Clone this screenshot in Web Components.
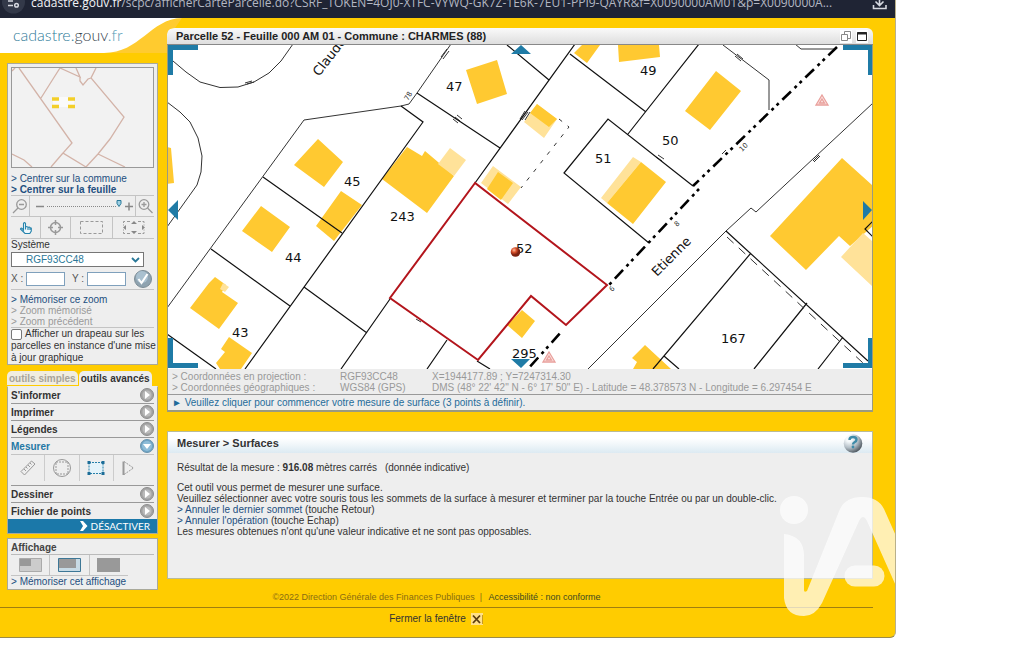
<!DOCTYPE html>
<html lang="fr">
<head>
<meta charset="utf-8">
<title>cadastre.gouv.fr - Parcelle 52</title>
<style>
  body { margin: 0; background: #fff; font: 10px/11px "Liberation Sans", Arial, sans-serif; color: #333; }
</style>
</head>
<body>
<app-window>
  <url-bar slot="chrome"></url-bar>
  <site-logo slot="side"></site-logo>
  <navigation-panel slot="side"></navigation-panel>
  <tools-panel slot="side"></tools-panel>
  <display-panel slot="side"></display-panel>
  <map-panel heading="Parcelle 52 - Feuille 000 AM 01 - Commune : CHARMES (88)">
    <cadastral-map></cadastral-map>
    <coordinate-bar slot="status"></coordinate-bar>
    <span slot="message">► Veuillez cliquer pour commencer votre mesure de surface (3 points à définir).</span>
  </map-panel>
  <info-panel heading="Mesurer &gt; Surfaces">
    <measure-result value="916.08"></measure-result>
  </info-panel>
  <page-footer slot="footer"></page-footer>
  <brand-mark slot="overlay"></brand-mark>
</app-window>

<script>
const define = (name, html, setup) => {
  const tpl = document.createElement('template');
  tpl.innerHTML = html;
  customElements.define(name, class extends HTMLElement {
    constructor() {
      super();
      this.attachShadow({ mode: 'open' }).append(tpl.content.cloneNode(true));
    }
    connectedCallback() { if (setup) setup(this, this.shadowRoot); }
  });
};

define('app-window', `
<style>
  :host { display: block; position: relative; margin-right: 129px; background: #fc0; overflow: hidden;
    border-right: 1px solid #b9b08a; border-bottom: 1px solid #9a8a4a; border-radius: 0 0 6px 0; }
  .columns { display: flex; gap: 9px; padding: 0 22px 0 0; }
  .side { flex: none; width: 158px; }
  .main { flex: 1; min-width: 0; padding-top: 10px; display: flex; flex-direction: column; gap: 19px; }
</style>
<slot name="chrome"></slot>
<div class="columns">
  <div class="side"><slot name="side"></slot></div>
  <main class="main"><slot></slot></main>
</div>
<slot name="footer"></slot>
<slot name="overlay"></slot>`);

define('url-bar', `
<style>
  :host { display: flex; align-items: flex-start; height: 18px; background: #1f2434; color: #b3b7c2; overflow: hidden;
    font: 12px/18px "Open Sans", "Noto Sans", sans-serif; }
  .url { flex: 1; min-width: 0; margin-top: -6px; white-space: nowrap; overflow: hidden; }
  b { font-weight: 400; color: #f2f3f6; }
  svg { display: block; flex: none; }
  .site { width: 31px; height: 18px; }
  .dl { width: 30px; height: 18px; }
</style>
<svg class="site" viewBox="0 0 31 18"><circle cx="13.500" cy="2" r="11.500" fill="#333949"/>
  <g stroke="#d5d8e0" stroke-width="1.500" fill="none"><path d="M8 1h5M13 5.500H8"/><circle cx="16.500" cy="5.300" r="1.800"/></g></svg>
<div class="url"><b>cadastre.gouv.fr</b>/scpc/afficherCarteParcelle.do?CSRF_TOKEN=4OJ0-XTFC-VYWQ-GK7Z-1E6K-7EU1-PPI9-QAYR&amp;f=X0090000AM01&amp;p=X0090000A...</div>
<svg class="dl" viewBox="0 0 30 18"><g stroke="#d5d8e0" stroke-width="1.600" fill="none"><path d="M14.500 0v5M10.500 1.500l4 4 4-4M8.500 5v3.500H21V5"/></g></svg>`);

define('site-logo', `
<style>
  :host { display: block; position: relative; height: 35px; margin-bottom: 10px; }
  .bg { display: block; width: 182px; height: 35px; }
  a { position: absolute; left: 13px; top: 6px; font: 300 16px/22px Lato, sans-serif; color: #2f7b99; text-decoration: none; }
  .g { color: #36444e; } .f { color: #559cb6; }
</style>
<svg class="bg" viewBox="0 0 182 35"><path d="M182 0C150 2 138 35 104 35H167V16q0-6 8-6L182 0Z" fill="#ffcb2f"/><path d="M0 0H182C150 1 140 35 104 35H0Z" fill="#fff"/></svg>
<a href="#">cadastre.<span class="g">gouv</span><span class="f">.fr</span></a>`);

define('side-box', `
<style>
  :host { display: block; margin-left: 7px; padding: 0 3px; background: #eee; border: 1px solid #a9a99a; }
</style><slot></slot>`);

define('nav-link', `
<style>
  :host { display: block; white-space: nowrap; }
  a { color: #234f80; text-decoration: none; }
  :host([strong]) a { font-weight: 700; }
  :host([off]) a { color: #9a9a9a; }
</style><a href="#">&gt; <slot></slot></a>`);

define('mini-map', `
<style>
  :host { display: block; background: #f2f2f2; border: 1px solid #999; }
  svg { display: block; width: 100%; }
</style>
<svg viewBox="0 0 141 99" fill="none" stroke="#d3b3a8" stroke-width="1.300">
  <path d="M7 0L60 75 51 85 74 99 86 86 98 71 112 49 79 10 84 0M0 3l3-3M29 30L41 11 48 0 68 9 64 0M68 9v4l3 4 5-6 3-1M51 85L39 99M86 86l27 13M0 86l12 6 8 7"/>
  <path d="M41 29h21v10H41z" fill="#fafafa" stroke="none"/>
  <path d="M40 31h7M56 31h7M40 38.500h7M56 38.500h7" stroke="#f3cf2a" stroke-width="3.600"/>
</svg>`);

define('navigation-panel', `
<style>
  :host { display: block; color: #333; }
  mini-map { margin: 3px 0 5px; }
  .row { display: flex; align-items: stretch; border-top: 1px solid #c4c4c4; }
  button { border: 0; padding: 0; background: none; display: flex; align-items: center; justify-content: center; }
  svg { display: block; }
  .zoom { height: 20px; }
  .zoom button { flex: none; width: 18px; }
  .zoom .track { flex: 1; border: solid #c4c4c4; border-width: 0 1px; display: flex; align-items: center; justify-content: center; }
  .modes { height: 21px; }
  .modes button { flex: 1; }
  .modes button + button { border-left: 1px solid #c4c4c4; }
  .modes button:nth-child(n+3) { flex: none; width: 42px; }
  label { display: block; }
  .sys { padding: 0 0 2px; }
  .sel { position: relative; width: 133px; }
  select { appearance: none; display: block; width: 133px; height: 15px; box-sizing: border-box; border: 1px solid #767676; border-radius: 0;
    background: #fff; color: #2a7898; font: inherit; padding: 0 0 0 14px; }
  .sel svg { position: absolute; right: 4px; top: 5px; }
  .xy { display: flex; align-items: center; height: 21px; padding-top: 1px; color: #555; }
  .xy label { width: 15px; }
  .xy label.y { width: 15px; margin-left: 7px; }
  .xy input { width: 39px; height: 14px; box-sizing: border-box; border: 1px solid #7fa0bc; background: #fff; padding: 0 2px; font: inherit; }
  .xy button { margin-left: auto; margin-right: 2px; }
  .links { border-top: 1px solid #c4c4c4; padding: 4px 0 0; }
  .flag { border-top: 1px solid #c4c4c4; line-height: 12px; white-space: nowrap; }
  .flag input { appearance: none; box-sizing: border-box; width: 11px; height: 11px; margin: 1px 3px 0 0; border: 1px solid #777; border-radius: 2px; background: #fff; vertical-align: top; }
</style>
<side-box>
  <mini-map></mini-map>
  <nav-link>Centrer sur la commune</nav-link>
  <nav-link strong>Centrer sur la feuille</nav-link>
  <div class="row zoom">
    <button aria-label="Zoom arrière"><svg width="16" height="18" viewBox="0 0 16 18" fill="none" stroke="#999" stroke-width="1.300"><circle cx="9.500" cy="7.500" r="4.800"/><path d="M6 11l-5 5M7 7.500h5"/></svg></button>
    <div class="track"><svg width="104" height="18" viewBox="0 0 104 18"><path d="M5 9.500h8M94 9.500h8M98 5.500v8" stroke="#888" stroke-width="1.500"/><path d="M16 9.500h70" stroke="#888" stroke-dasharray="1 1"/><path d="M86 3.500h4v3l-2 3-2-3z" fill="#9fd0e4" stroke="#287a9a"/></svg></div>
    <button aria-label="Zoom avant"><svg width="16" height="18" viewBox="0 0 16 18" fill="none" stroke="#999" stroke-width="1.300"><circle cx="7" cy="7.500" r="4.800"/><path d="M10.500 11l5 5M4.500 7.500h5M7 5v5"/></svg></button>
  </div>
  <div class="row modes">
    <button aria-label="Déplacer"><svg width="14" height="14" viewBox="0 0 14 14" fill="#eef8fc" stroke="#2583ac" stroke-width="1.100"><path d="M4.500 9V2.500q1-1.800 2 0V6l1.200-.5 1.300.7 1.300-.2 1 .8 1 .4V10l-1.500 2.500H6L1.500 8q.5-1.500 1.800-.4zM6.500 6v2.500M9 6.500v2.500M11 7v2"/></svg></button>
    <button aria-label="Recentrer"><svg width="17" height="17" viewBox="0 0 17 17" fill="none" stroke="#999" stroke-width="1.500"><circle cx="8.500" cy="8.500" r="5"/><path d="M8.500 1v5M8.500 11v5M1 8.500h5M11 8.500h5"/></svg></button>
    <button aria-label="Zoom rectangle"><svg width="24" height="14" viewBox="0 0 24 14" fill="none" stroke="#999"><path d="M.5.500h22v12H.5z" stroke-dasharray="3 2"/></svg></button>
    <button aria-label="Étendue"><svg width="24" height="15" viewBox="0 0 24 15" fill="#888"><path d="M3 1.500H1.500V3M5 1.500h3M16 1.500h3M20.500 1.500H22V3M1.500 12v1.500H3M5 13.500h3M16 13.500h3M20.500 13.500H22V12M1.500 4.500v1M1.500 9.500v1M22 4.500v1M22 9.500v1" stroke="#999" fill="none"/><path d="M12 1l3 3H9zM12 14l3-3H9zM1 7.500l3-2.500v5zM23 7.500l-3-2.500v5z"/></svg></button>
  </div>
  <div class="row"></div>
  <label class="sys" for="sys">Système</label>
  <div class="sel"><select id="sys"><option>RGF93CC48</option></select>
    <svg width="9" height="6" viewBox="0 0 9 6"><path d="M1 1l3.500 3.500L8 1" fill="none" stroke="#2a7898" stroke-width="1.800"/></svg></div>
  <div class="xy">
    <label for="x">X :</label><input id="x">
    <label class="y" for="y">Y :</label><input id="y">
    <button aria-label="Valider"><svg width="18" height="18" viewBox="0 0 18 18"><circle cx="9" cy="9" r="8.500" fill="#8fa3b0" stroke="#7c8c96"/><circle cx="8" cy="7" r="6" fill="#a9c0cf"/><path d="M4.500 9l3 4 6-9" fill="none" stroke="#fff" stroke-width="2"/></svg></button>
  </div>
  <div class="links">
    <nav-link>Mémoriser ce zoom</nav-link>
    <nav-link off>Zoom mémorisé</nav-link>
    <nav-link off>Zoom précédent</nav-link>
  </div>
  <label class="flag"><input type="checkbox">Afficher un drapeau sur les<br>parcelles en instance d'une mise<br>à jour graphique</label>
</side-box>`);

define('tool-section', `
<style>
  :host { display: block; border-bottom: 1px solid #999; }
  button { display: flex; align-items: center; justify-content: space-between; width: 100%; height: 16px; border: 0; padding: 0;
    background: none; font: 700 10px/11px "Liberation Sans", Arial, sans-serif; color: #333; }
  svg { display: block; }
  .open { display: none; }
  :host([open]) button { color: #2478a5; }
  :host([open]) .open { display: inline; }
  :host([open]) .closed { display: none; }
</style>
<button><slot name="title"></slot>
<svg width="14" height="14" viewBox="0 0 14 14">
  <g class="closed"><circle cx="7" cy="7" r="6.500" fill="#a3a3a3" stroke="#8d8d8d"/><circle cx="7" cy="7" r="4.500" fill="#bbb"/><path d="M5 3l5 4-5 4z" fill="#fff"/></g>
  <g class="open"><circle cx="7" cy="7" r="6.500" fill="#6fa5c6" stroke="#6a93ad"/><circle cx="7" cy="7" r="5" fill="#8fbdd8"/><path d="M3 5h8l-4 5z" fill="#fff"/></g>
</svg></button>
<slot></slot>`);

define('measure-tools', `
<style>
  :host { display: flex; height: 30px; border-top: 1px solid #c4c4c4; }
  button { flex: 1; padding: 0; margin: 0 0 4px; border: 0; background: none; display: flex; align-items: center; justify-content: center; }
  button + button { border-left: 1px solid #ccc; }
  button:last-child { justify-content: flex-start; padding-left: 7px; }
</style>
<button aria-label="Distance"><svg width="16" height="16" viewBox="0 0 16 16" fill="none" stroke="#999"><path d="M1 11.500L11.500 1l3.500 3L4.500 15zM4 9l2 2M6 7l1.500 1.500M8 5l2 2M10 3l1.500 1.500"/></svg></button>
<button aria-label="Cercle"><svg width="20" height="20" viewBox="0 0 20 20" fill="none" stroke="#999"><circle cx="10" cy="10" r="8.500"/><path d="M4 4h12v12H4z" stroke-dasharray="2 1"/></svg></button>
<button aria-label="Surface"><svg width="18" height="16" viewBox="0 0 18 16"><path d="M2 2.500h14v11H2z" fill="#e4f3fa" stroke="#2580aa" stroke-dasharray="2 1"/><path d="M.5 1h3v3h-3zM14.500 1h3v3h-3zM.5 12h3v3h-3zM14.500 12h3v3h-3z" fill="#1c6d98"/></svg></button>
<button aria-label="Angle"><svg width="14" height="16" viewBox="0 0 14 16" fill="none" stroke="#999"><path d="M2.500 15V1.500" stroke-width="2"/><path d="M3 1.500L12.500 8 3 14.500" stroke-dasharray="2 1"/></svg></button>`);

define('tools-panel', `
<style>
  :host { display: block; margin-top: 6px; }
  .tabs { display: flex; margin-left: 7px; gap: 1px; }
  .tabs button { border: 0; border-radius: 5px 5px 0 0; background: #eee; height: 15px; padding: 0 2px; font: 700 10px/15px "Liberation Sans", Arial, sans-serif; color: #333; white-space: nowrap; }
  .tabs .off { background: #f1ede0; color: #a8a49a; height: 14px; }
  .box { margin-left: 7px; border: 1px solid #a9a99a; border-top-color: #eee; background: #eee; }
  .list { padding: 0 3px; }
  tool-section:last-child { border-bottom: 0; }
  .stop { display: flex; width: 100%; height: 14px; border: 0; padding: 0 7px 0 0; background: #1b78a9; color: #fff; justify-content: flex-end; align-items: center; gap: 3px;
    font: 10px/14px Lato, sans-serif; }
</style>
<div class="tabs"><button class="off">outils simples</button><button>outils avancés</button></div>
<div class="box"><div class="list">
  <tool-section><span slot="title">S'informer</span></tool-section>
  <tool-section><span slot="title">Imprimer</span></tool-section>
  <tool-section><span slot="title">Légendes</span></tool-section>
  <tool-section open><span slot="title">Mesurer</span><measure-tools></measure-tools></tool-section>
  <tool-section><span slot="title">Dessiner</span></tool-section>
  <tool-section><span slot="title">Fichier de points</span></tool-section>
</div>
<button class="stop"><svg width="8" height="10" viewBox="0 0 8 10"><path d="M0 0h3l4.500 5L3 10H0l3-5z" fill="#fff"/></svg>DÉSACTIVER</button></div>`);

define('display-panel', `
<style>
  :host { display: block; margin-top: 4px; }
  h2 { margin: 3px 0 0; font: 700 10px/12px "Liberation Sans", Arial, sans-serif; color: #444; border-bottom: 1px solid #bbb; }
  .modes { display: flex; width: 117px; height: 20px; border-bottom: 1px solid #c4c4c4; }
  button { flex: 1; padding: 0; border: 0; background: none; display: flex; align-items: center; justify-content: center; }
  button + button { border-left: 1px solid #c4c4c4; }
  nav-link { padding-bottom: 2px; }
</style>
<side-box>
  <h2>Affichage</h2>
  <div class="modes">
    <button aria-label="Petit"><svg width="23" height="14" viewBox="0 0 23 14"><path d="M.5.500h22v13H.5z" fill="#ccc" stroke="#aaa"/><path d="M1 1h11v7H1z" fill="#999"/></svg></button>
    <button aria-label="Moyen"><svg width="23" height="14" viewBox="0 0 23 14"><path d="M.5.500h22v13H.5z" fill="#c8dbe5" stroke="#3d7796"/><path d="M1 1h17v9H1z" fill="#999"/></svg></button>
    <button aria-label="Grand"><svg width="23" height="14" viewBox="0 0 23 14"><path d="M0 0h23v14H0z" fill="#999"/></svg></button>
  </div>
  <nav-link>Mémoriser cet affichage</nav-link>
</side-box>`);

define('map-panel', `
<style>
  :host { display: block; }
  header { display: flex; align-items: center; height: 16px; padding: 0 5px 0 9px; border-radius: 6px 6px 0 0; background: linear-gradient(#fafafa, #dedede); border-bottom: 1px solid #888; }
  h1 { flex: 1; margin: 0; font: 700 11px/16px "Liberation Sans", Arial, sans-serif; color: #222; white-space: nowrap; }
  header button { width: 12px; height: 13px; padding: 0; border: 0; margin-left: 4px; background: #fff; }
  header svg { display: block; }
  .body { border: solid #9a9a80; border-width: 0 1px 2px 1px; background: #ededed; }
  .msg { padding: 0 4px; border-top: 1px solid #999; height: 15px; line-height: 15px; color: #1f6c9a; }
</style>
<header><h1></h1>
  <button aria-label="Restaurer"><svg width="12" height="13" viewBox="0 0 12 13" fill="#fff" stroke="#888"><path d="M4.500 1.500h6v7h-6z"/><path d="M1.500 4.500h6v6h-6z"/></svg></button>
  <button aria-label="Agrandir"><svg width="12" height="13" viewBox="0 0 12 13" fill="#fff" stroke="#222"><path d="M1.500 2.500h9v8h-9z"/><path d="M1 3.500h10" stroke-width="2"/></svg></button>
</header>
<div class="body"><slot></slot><slot name="status"></slot><div class="msg"><slot name="message"></slot></div></div>`,
(host, root) => { root.querySelector('h1').textContent = host.getAttribute('heading'); });

define('cadastral-map', `
<style>
  :host { display: block; background: #fff; }
  svg { display: block; width: 100%; font-family: "DejaVu Sans", sans-serif; font-size: 13px; }
  .b { fill: #ffc931; } .l { fill: #ffe299; }
  .line { fill: none; stroke: #111; stroke-width: 1.200; }
  .thin { fill: none; stroke: #333; stroke-width: 1; }
  .limit { fill: none; stroke: #000; stroke-width: 2.600; stroke-dasharray: 12 5 3 4 3 5; }
  .sel { fill: none; stroke: #b3151c; stroke-width: 2; }
  .nav { fill: #1f7ba6; }
  .small { font-size: 7px; fill: #333; }
</style>
<svg viewBox="168 45 704 324" role="img" aria-label="Plan cadastral">
  <defs><radialGradient id="ball" cx=".35" cy=".3"><stop offset="0" stop-color="#ffc0a0"/><stop offset=".5" stop-color="#d8502a"/><stop offset="1" stop-color="#7c2210"/></radialGradient></defs>
  <path class="b" d="M318 139L343 162 324 187 294 165ZM261 206L290 227 272 252 242 231ZM341 191L362 205 334 241 316 226Z
    M215 277L226 285 222 292 238 303 219 329 190 308 209 283ZM229 337L252 353 241 369H220L216 363 225 352 221 349Z
    M167 147L171 148 174 183 167 184ZM407 147L422 156 425 151 438 162 454 176 427 213 382 179ZM466 70L497 60 507 94 477 104Z
    M582 45H600L587 63 574 53ZM618 45H659L660 57 619 62ZM716 71L741 91 710 130 685 111Z
    M842 158L873 186V226L850 246 839 236 806 270 770 236ZM645 345L671 369H633L637 362 632 358ZM522 310L535 321 522 338 507 325Z"/>
  <path class="l" d="M537 104L557 119 544 138 524 122ZM493 166L521 187 508 204 481 183ZM450 148L466 160 454 176 438 164ZM633 157L641 162 607 203 601 198Z
    M841 257L863 233 873 242V287ZM223 283L229 287 225 292 220 289Z"/>
  <path class="b" d="M537 104L557 119 549 127 530 113ZM498 172L513 183 501 200 487 189ZM641 162L666 182 633 224 607 203Z"/>
  <g class="thin">
    <path d="M168 57L173 61 186 72 200 82 220 87.500 238 87 254 82 269 73 281 61 293 44"/>
    <path d="M167 102L180 112 190 122 198 138 202 156 201 172 197 185 167 227"/>
    <path d="M167 308L304 120 401 106 409 104 417 93 451 44"/>
    <path d="M723 45L769 80V110M795 44L801 49H836M873 103L756 212 751 208 726 231 640 317 588 369"/>
    <path d="M245 83l7-2M247 84l7-2M441 57l6-8M443 59l6-8M735 56l6 5M737 54l6 5M813 161l6-6M814 162l6-6M656 157l6 4M658 155l6 4M722 154l4-4"/>
    <path d="M453 119l5 4M455 117l5 4M457 115l5 4M520 119l5-8M522 120l6-8M525 120l5-8M416 319l5 3"/>
  </g>
  <path class="line" d="M401 106L423 122 245 369M263 177L342 233M211 249L290 306M304 287L367 333M390 299L341 369M167 334L216 369M417 93L500 148
    M507 45L549 80M575 44L475 183M570 54L646 112M699 44L628 134M649 243L564 173 608 119 693 186M447 340L427 369M477 361L490 369
    M726 231L868 361M751 253L653 369M664 356L679 369M807 303L754 369M843 337L818 369M873 221L865 229 873 237"/>
  <path class="thin" d="M727 237L863 363" stroke-dasharray="9 7"/>
  <path class="thin" d="M559 119L569 127 521 188" stroke-dasharray="4 7"/>
  <path class="limit" d="M837 47L693 186"/>
  <path class="limit" d="M699 189L608 286" stroke-dashoffset="17"/>
  <path class="limit" d="M563 330L527 370" stroke-dashoffset="27"/>
  <path class="sel" d="M475 183L390 298 478 360 531 296 566 325 607 285Z"/>
  <g fill="#111">
    <text x="446" y="91">47</text><text x="640" y="75">49</text><text x="662" y="145">50</text><text x="595" y="163">51</text>
    <text x="344" y="186">45</text><text x="285" y="262">44</text><text x="232" y="337">43</text><text x="390" y="221">243</text>
    <text x="516" y="253">52</text><text x="512" y="358">295</text><text x="721" y="343">167</text>
    <text transform="translate(657 277) rotate(-45)">Etienne</text>
    <text transform="translate(319 77) rotate(-52)">Claude</text>
  </g>
  <text class="small" transform="translate(408 101) rotate(-60)">78</text>
  <text class="small" transform="translate(742 152) rotate(-45)">10</text>
  <text class="small" transform="translate(677 227) rotate(-45)">8</text>
  <text class="small" transform="translate(612 292) rotate(-45)">6</text>
  <circle cx="515.500" cy="252" r="4.800" fill="url(#ball)"/>
  <g fill="#fbe4e2" stroke="#e9a09c" stroke-width="1.300">
    <path d="M822 95l6 10h-12zM549 352l6 10h-12z"/><path d="M822 99l2.500 4h-5zM549 356l2.500 4h-5z"/>
  </g>
  <path class="nav" d="M168 45h30v5h-25v25h-5zM872 45h-29v5h25v25h4zM168 368h30v-5h-25v-25h-5zM872 368h-29v-5h25v-25h4z
    M521 45l10 9h-20zM521 368l9-9h-19zM168 210l10-10v20zM872 210l-9-9v19z"/>
</svg>`);

define('coordinate-bar', `
<style>
  :host { display: block; padding: 2px 4px 1px; color: #999; }
  table { border-collapse: collapse; font: inherit; }
  th, td { padding: 0; font-weight: 400; text-align: left; white-space: nowrap; }
  th { width: 168px; } .sys { width: 92px; }
</style>
<table>
  <tr><th scope="row">&gt; Coordonnées en projection :</th><td class="sys">RGF93CC48</td><td>X=1944177.89 ; Y=7247314.30</td></tr>
  <tr><th scope="row">&gt; Coordonnées géographiques :</th><td class="sys">WGS84 (GPS)</td><td>DMS (48° 22' 42" N - 6° 17' 50" E) - Latitude = 48.378573 N - Longitude = 6.297454 E</td></tr>
</table>`);

define('info-panel', `
<style>
  :host { display: block; border: 1px solid #b9bb98; background: #eee; min-height: 146px; }
  header { display: flex; align-items: center; height: 21px; padding: 0 9px; background: linear-gradient(#fff 30%, #dceaf2); }
  h2 { flex: 1; margin: 0; font: 700 11px/20px "Liberation Sans", Arial, sans-serif; color: #333; }
  button { border: 0; padding: 0; background: none; }
  svg { display: block; }
  .body { padding: 9px; }
</style>
<header><h2></h2><button aria-label="Aide"><svg width="20" height="20" viewBox="0 0 20 20">
  <defs><radialGradient id="g" cx=".3" cy=".25" r=".8"><stop offset=".2" stop-color="#f4f8fa"/><stop offset=".6" stop-color="#b3bec6"/><stop offset="1" stop-color="#4d565e"/></radialGradient></defs>
  <circle cx="10" cy="10.500" r="9.300" fill="url(#g)"/><path d="M6.500 7q0-3 3.500-3t3.500 2.800q0 1.500-2 2.500-1.500.8-1.500 2.200" fill="none" stroke="#3f8ba8" stroke-width="2.400"/><circle cx="10" cy="14" r="1.400" fill="#3f8ba8"/></svg></button></header>
<div class="body"><slot></slot></div>`,
(host, root) => { root.querySelector('h2').textContent = host.getAttribute('heading'); });

define('measure-result', `
<style>
  :host { display: block; color: #333; }
  p { margin: 0; }
  .r { margin-bottom: 9px; }
  .r span { margin-left: 5px; }
  a { color: #234f80; text-decoration: none; }
</style>
<p class="r">Résultat de la mesure : <b></b> mètres carrés <span>(donnée indicative)</span></p>
<p>Cet outil vous permet de mesurer une surface.</p>
<p>Veuillez sélectionner avec votre souris tous les sommets de la surface à mesurer et terminer par la touche Entrée ou par un double-clic.</p>
<p><a href="#">&gt; Annuler le dernier sommet</a> (touche Retour)</p>
<p><a href="#">&gt; Annuler l'opération</a> (touche Echap)</p>
<p>Les mesures obtenues n'ont qu'une valeur indicative et ne sont pas opposables.</p>`,
(host, root) => { root.querySelector('b').textContent = host.getAttribute('value'); });

define('page-footer', `
<style>
  :host { display: block; margin-right: 22px; text-align: center; }
  .legal { padding: 2px 0 4px; border-bottom: 1px solid #a07e10; font-size: 9px; color: #8a6d12; }
  .legal a { color: #3c4a20; text-decoration: none; margin-left: 4px; }
  .close { height: 29px; display: flex; justify-content: center; }
  button { display: flex; align-items: center; gap: 5px; height: 21px; border: 0; padding: 0; background: none; font: inherit; color: #333; }
</style>
<div class="legal">©2022 Direction Générale des Finances Publiques &nbsp;| <a href="#">Accessibilité : non conforme</a></div>
<div class="close"><button>Fermer la fenêtre <svg width="13" height="12" viewBox="0 0 13 12"><path d="M0 0h12v12H0z" fill="#ffe08a"/><path d="M2 2.500l7 7.500M9 2.500L2 10" stroke="#5a3c10" stroke-width="1.800"/><path d="M11.500 2v9" stroke="#c89b20"/></svg></button></div>`);

define('brand-mark', `
<style>
  :host { position: absolute; right: -27px; bottom: 20px; pointer-events: none; opacity: .7; }
  svg { display: block; }
</style>
<svg width="142" height="122" viewBox="0 0 142 122">
  <mask id="m"><g fill="#fff"><circle cx="14" cy="15" r="14"/>
    <path d="M4 39q20 2 20 22v34q0 3 3 1L60 14Q66 2 82 2t22 12l12 27 26 58-26-8L87 26q-4-8-8 0L42 108q-7 13-18 13-18 0-20-18z"/>
    <path d="M75 81h19" stroke="#fff" stroke-width="21" stroke-linecap="round"/></g></mask>
  <path d="M0 0h142v122H0z" fill="#fff" mask="url(#m)"/>
</svg>`);
</script>
</body>
</html>
